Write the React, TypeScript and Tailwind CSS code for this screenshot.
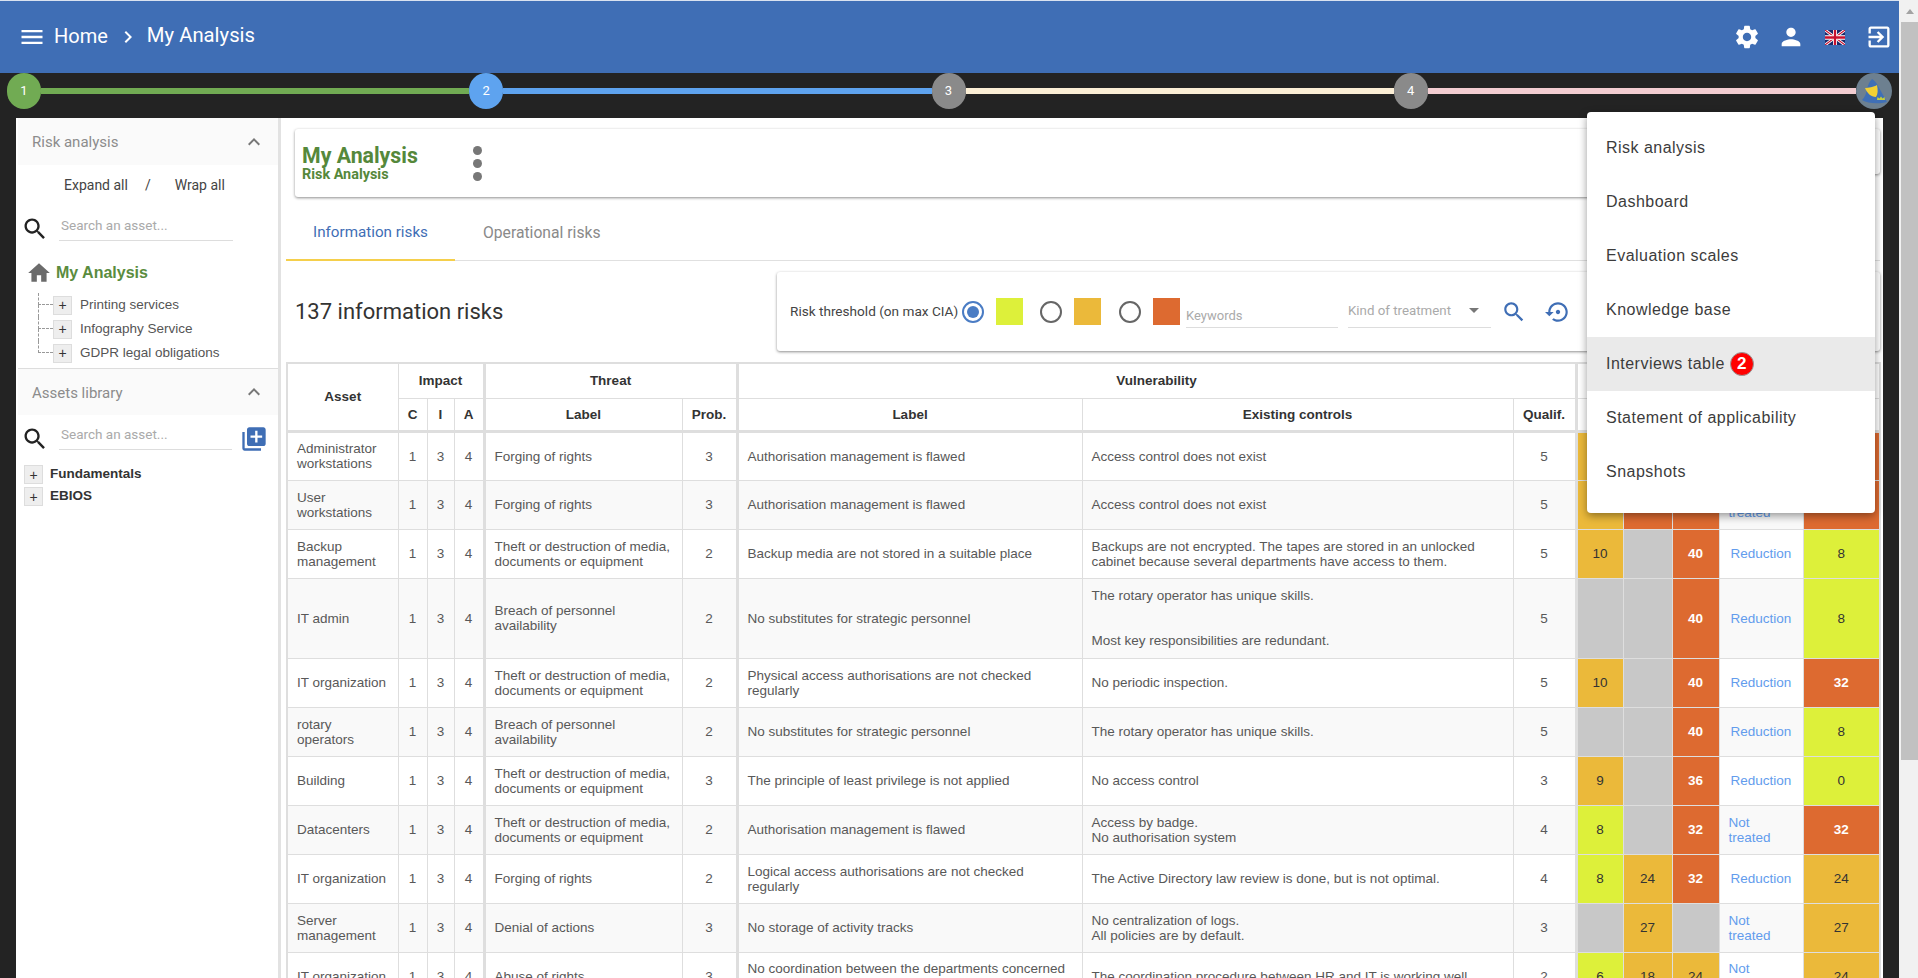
import React from "react";

const P = {
  settings: "M19.14 12.94c.04-.3.06-.61.06-.94 0-.32-.02-.64-.07-.94l2.03-1.58c.18-.14.23-.41.12-.61l-1.92-3.32c-.12-.22-.37-.29-.59-.22l-2.39.96c-.5-.38-1.03-.7-1.62-.94l-.36-2.54c-.04-.24-.24-.41-.48-.41h-3.84c-.24 0-.43.17-.47.41l-.36 2.54c-.59.24-1.13.57-1.62.94l-2.39-.96c-.22-.08-.47 0-.59.22L2.74 8.87c-.12.21-.08.47.12.61l2.03 1.58c-.05.3-.09.63-.09.94s.02.64.07.94l-2.03 1.58c-.18.14-.23.41-.12.61l1.92 3.32c.12.22.37.29.59.22l2.39-.96c.5.38 1.03.7 1.62.94l.36 2.54c.05.24.24.41.48.41h3.84c.24 0 .44-.17.47-.41l.36-2.54c.59-.24 1.13-.56 1.62-.94l2.39.96c.22.08.47 0 .59-.22l1.92-3.32c.12-.22.07-.47-.12-.61l-2.01-1.58zM12 15.6c-1.98 0-3.6-1.62-3.6-3.6s1.62-3.6 3.6-3.6 3.6 1.62 3.6 3.6-1.62 3.6-3.6 3.6z",
  person: "M12 12c2.21 0 4-1.79 4-4s-1.79-4-4-4-4 1.79-4 4 1.79 4 4 4zm0 2c-2.67 0-8 1.34-8 4v2h16v-2c0-2.66-5.33-4-8-4z",
  exit: "M10.09 15.59L11.5 17l5-5-5-5-1.41 1.41L12.67 11H3v2h9.67l-2.58 2.59zM19 3H5c-1.11 0-2 .9-2 2v4h2V5h14v14H5v-4H3v4c0 1.1.89 2 2 2h14c1.1 0 2-.9 2-2V5c0-1.1-.9-2-2-2z",
  menu: "M3 18h18v-2H3v2zm0-5h18v-2H3v2zm0-7v2h18V6H3z",
  chevron: "M10 6L8.59 7.41 13.17 12l-4.58 4.59L10 18l6-6z",
  less: "M12 8l-6 6 1.41 1.41L12 10.83l4.59 4.58L18 14z",
  search: "M15.5 14h-.79l-.28-.27C15.41 12.59 16 11.11 16 9.5 16 5.91 13.09 3 9.5 3S3 5.91 3 9.5 5.91 16 9.5 16c1.61 0 3.09-.59 4.23-1.57l.27.28v.79l5 4.99L20.49 19l-4.99-5zm-6 0C7.01 14 5 11.99 5 9.5S7.01 5 9.5 5 14 7.01 14 9.5 11.99 14 9.5 14z",
  home: "M10 20v-6h4v6h5v-8h3L12 3 2 12h3v8z",
  add: "M4 6H2v14c0 1.1.9 2 2 2h14v-2H4V6zm16-4H8c-1.1 0-2 .9-2 2v12c0 1.1.9 2 2 2h12c1.1 0 2-.9 2-2V4c0-1.1-.9-2-2-2zm-1 9h-4v4h-2v-4H9V9h4V5h2v4h4v2z",
  restore: "M14 12c0-1.1-.9-2-2-2s-2 .9-2 2 .9 2 2 2 2-.9 2-2zm-2-9c-4.97 0-9 4.03-9 9H0l4 4 4-4H5c0-3.87 3.13-7 7-7s7 3.13 7 7-3.13 7-7 7c-1.51 0-2.91-.49-4.06-1.3l-1.42 1.44C8.04 20.3 9.94 21 12 21c4.97 0 9-4.03 9-9s-4.03-9-9-9z",
};

function Ic({ d, className }: { d: string; className: string }) {
  return (
    <svg viewBox="0 0 24 24" className={className} fill="currentColor">
      <path d={d} />
    </svg>
  );
}

function Flag() {
  return (
    <svg viewBox="0 0 60 40" className="w-[20px] h-[15px]" preserveAspectRatio="none">
      <rect width="60" height="40" fill="#1b2a6b" />
      <path d="M0 0L60 40M60 0L0 40" stroke="#fff" strokeWidth="8" />
      <path d="M0 0L60 40M60 0L0 40" stroke="#c8102e" strokeWidth="3" />
      <path d="M30 0V40M0 20H60" stroke="#fff" strokeWidth="12" />
      <path d="M30 0V40M0 20H60" stroke="#c8102e" strokeWidth="7" />
    </svg>
  );
}

function Logo() {
  return (
    <svg viewBox="0 0 36 36" className="w-[36px] h-[36px] shrink-0">
      <circle cx="18" cy="18" r="18" fill="#6d8090" />
      <path d="M16 6C18 7 20 9 22 13L31 29C24 31 12 31 6 27C9 24 10 21 11 16C12 12 13 9 16 6z" fill="#3f6fb6" />
      <path d="M9 15C12 15 18 14 21 12C22 17 22 21 20 24C15 24 11 20 9 15z" fill="#f2d033" />
      <path d="M21 27l0.5-3 2 1.5 1.5-2 1.5 2 2-1.5 0.5 3z" fill="#c7cf3a" />
    </svg>
  );
}

const Y = "bg-[#ddf03a] text-[#333]";
const A = "bg-[#ebb93a] text-[#333]";
const O = "bg-[#dd6a30] text-white font-bold";
const G = "bg-[#c8c8c8]";

type C = [string, string];
type Row = {
  asset: React.ReactNode;
  threat: React.ReactNode;
  prob: number;
  vuln: React.ReactNode;
  ctrl: React.ReactNode;
  q: number;
  r: C[];
  treat: string;
  res: C;
  h?: string;
};

const THEFT = <>Theft or destruction of media,<br />documents or equipment</>;
const BREACH = <>Breach of personnel<br />availability</>;

const rows: Row[] = [
  { asset: <>Administrator<br />workstations</>, threat: "Forging of rights", prob: 3, vuln: "Authorisation management is flawed", ctrl: "Access control does not exist", q: 5, r: [[A, ""], [G, ""], [O, ""]], treat: "", res: [O, ""] },
  { asset: <>User<br />workstations</>, threat: "Forging of rights", prob: 3, vuln: "Authorisation management is flawed", ctrl: "Access control does not exist", q: 5, r: [[A, ""], [O, ""], [O, ""]], treat: "Not treated", res: [O, ""] },
  { asset: <>Backup<br />management</>, threat: THEFT, prob: 2, vuln: "Backup media are not stored in a suitable place", ctrl: <>Backups are not encrypted. The tapes are stored in an unlocked<br />cabinet because several departments have access to them.</>, q: 5, r: [[A, "10"], [G, ""], [O, "40"]], treat: "Reduction", res: [Y, "8"] },
  { asset: "IT admin", threat: BREACH, prob: 2, vuln: "No substitutes for strategic personnel", ctrl: <>The rotary operator has unique skills.<br /><br /><br />Most key responsibilities are redundant.</>, q: 5, r: [[G, ""], [G, ""], [O, "40"]], treat: "Reduction", res: [Y, "8"], h: "h-[80px]" },
  { asset: "IT organization", threat: THEFT, prob: 2, vuln: <>Physical access authorisations are not checked<br />regularly</>, ctrl: "No periodic inspection.", q: 5, r: [[A, "10"], [G, ""], [O, "40"]], treat: "Reduction", res: [O, "32"] },
  { asset: <>rotary<br />operators</>, threat: BREACH, prob: 2, vuln: "No substitutes for strategic personnel", ctrl: "The rotary operator has unique skills.", q: 5, r: [[G, ""], [G, ""], [O, "40"]], treat: "Reduction", res: [Y, "8"] },
  { asset: "Building", threat: THEFT, prob: 3, vuln: "The principle of least privilege is not applied", ctrl: "No access control", q: 3, r: [[A, "9"], [G, ""], [O, "36"]], treat: "Reduction", res: [Y, "0"] },
  { asset: "Datacenters", threat: THEFT, prob: 2, vuln: "Authorisation management is flawed", ctrl: <>Access by badge.<br />No authorisation system</>, q: 4, r: [[Y, "8"], [G, ""], [O, "32"]], treat: "Not treated", res: [O, "32"] },
  { asset: "IT organization", threat: "Forging of rights", prob: 2, vuln: <>Logical access authorisations are not checked<br />regularly</>, ctrl: "The Active Directory law review is done, but is not optimal.", q: 4, r: [[Y, "8"], [A, "24"], [O, "32"]], treat: "Reduction", res: [A, "24"] },
  { asset: <>Server<br />management</>, threat: "Denial of actions", prob: 3, vuln: "No storage of activity tracks", ctrl: <>No centralization of logs.<br />All policies are by default.</>, q: 3, r: [[G, ""], [A, "27"], [G, ""]], treat: "Not treated", res: [A, "27"] },
  { asset: "IT organization", threat: "Abuse of rights", prob: 3, vuln: <>No coordination between the departments concerned<br />&nbsp;</>, ctrl: "The coordination procedure between HR and IT is working well.", q: 2, r: [[Y, "6"], [A, "18"], [A, "24"]], treat: "Not treated", res: [A, "24"] },
];

const td = "border border-[#dedede] px-[9px] py-0 align-middle";
const tc = "border border-[#dedede] p-0 text-center align-middle";
const th = "border border-[#dedede] p-0 text-center align-middle font-bold text-[#333]";
const thick = "border-l-[3px] border-l-[#dedede]";

function RiskTable() {
  return (
    <table className="table-fixed border-collapse w-[1593px] border-2 border-[#dedede] text-[13.5px] leading-[15px] text-[#585858]">
      <colgroup>
        <col className="w-[111px]" />
        <col className="w-[29px]" />
        <col className="w-[27px]" />
        <col className="w-[30px]" />
        <col className="w-[198px]" />
        <col className="w-[55px]" />
        <col className="w-[345px]" />
        <col className="w-[431px]" />
        <col className="w-[63px]" />
        <col className="w-[47px]" />
        <col className="w-[49px]" />
        <col className="w-[47px]" />
        <col className="w-[84px]" />
        <col className="w-[77px]" />
      </colgroup>
      <thead>
        <tr className="h-[35px]">
          <th rowSpan={2} className={th}>Asset</th>
          <th colSpan={3} className={th}>Impact</th>
          <th colSpan={2} className={`${th} ${thick}`}>Threat</th>
          <th colSpan={3} className={`${th} ${thick}`}>Vulnerability</th>
          <th colSpan={5} className={`${th} ${thick}`}></th>
        </tr>
        <tr className="h-[33px] border-b-[3px] border-b-[#dedede]">
          <th className={th}>C</th>
          <th className={th}>I</th>
          <th className={th}>A</th>
          <th className={`${th} ${thick}`}>Label</th>
          <th className={th}>Prob.</th>
          <th className={`${th} ${thick}`}>Label</th>
          <th className={th}>Existing controls</th>
          <th className={th}>Qualif.</th>
          <th className={`${th} ${thick}`}></th>
          <th className={th}></th>
          <th className={th}></th>
          <th className={th}></th>
          <th className={th}></th>
        </tr>
      </thead>
      <tbody>
        {rows.map((r, i) => (
          <tr key={i} className={`${r.h ?? "h-[49px]"} ${i % 2 ? "bg-[#f9f9f9]" : "bg-white"}`}>
            <td className={td}>{r.asset}</td>
            <td className={tc}>1</td>
            <td className={tc}>3</td>
            <td className={tc}>4</td>
            <td className={`${td} ${thick}`}>{r.threat}</td>
            <td className={tc}>{r.prob}</td>
            <td className={`${td} ${thick}`}>{r.vuln}</td>
            <td className={td}>{r.ctrl}</td>
            <td className={tc}>{r.q}</td>
            <td className={`${tc} ${thick} ${r.r[0][0]}`}>{r.r[0][1]}</td>
            <td className={`${tc} ${r.r[1][0]}`}>{r.r[1][1]}</td>
            <td className={`${tc} ${r.r[2][0]}`}>{r.r[2][1]}</td>
            <td className={`${td} text-[#629ced]`}>
              {r.treat === "Not treated" ? <>Not<br />treated</> : <span className="pl-[2px]">{r.treat}</span>}
            </td>
            <td className={`${tc} ${r.res[0]}`}>{r.res[1]}</td>
          </tr>
        ))}
      </tbody>
    </table>
  );
}

function PlusBox({ className = "" }: { className?: string }) {
  return (
    <span className={`flex w-[19px] h-[19px] shrink-0 items-center justify-center bg-[#eee] border border-[#ddd] text-[#333] text-[14px] leading-none ${className}`}>+</span>
  );
}

function AccordionHead({ label, h }: { label: string; h: string }) {
  return (
    <div className={`${h} ml-[2px] pl-[14px] pr-[12px] flex items-center justify-between bg-[#fafafa] text-[15px] text-[#8c8c8c] font-[Roboto,sans-serif]`}>
      <span className="pt-[2px]">{label}</span>
      <Ic d={P.less} className="w-[24px] h-[24px] text-[#777]" />
    </div>
  );
}

function TreeRow({ label, last, h }: { label: string; last?: boolean; h: string }) {
  return (
    <li className={`flex items-center ${h}`}>
      <div className="w-[15px] h-full flex flex-col self-stretch shrink-0">
        <div className="h-1/2 border-l border-b border-dashed border-[#999]" />
        <div className={`h-1/2 ${last ? "" : "border-l border-dashed border-[#999]"}`} />
      </div>
      <PlusBox />
      <span className="ml-[8px] text-[13.5px] text-[#555]">{label}</span>
    </li>
  );
}

function Stepper() {
  const circle = "w-[34px] h-[36px] rounded-full flex items-center justify-center text-white text-[13px] shrink-0 font-[Roboto,sans-serif]";
  return (
    <div className="h-[45px] pl-[7px] pr-[7px] flex items-start">
      <div className={`${circle} bg-[#71ab53]`}>1</div>
      <div className="flex-1 h-[6px] mt-[15px] bg-[#71ab53]" />
      <div className={`${circle} bg-[#5ea3ef]`}>2</div>
      <div className="flex-1 h-[6px] mt-[15px] bg-[#5ea3ef]" />
      <div className={`${circle} bg-[#8a8a8a]`}>3</div>
      <div className="flex-1 h-[6px] mt-[15px] bg-[#fbeed5]" />
      <div className={`${circle} bg-[#8a8a8a]`}>4</div>
      <div className="flex-1 h-[6px] mt-[15px] bg-[#f2cdd1]" />
      <Logo />
    </div>
  );
}

function Radio({ on }: { on?: boolean }) {
  return (
    <svg viewBox="0 0 24 24" className={`w-[24px] h-[24px] shrink-0 ${on ? "text-[#4a7cc4]" : "text-[#666]"}`} fill="none">
      <circle cx="12" cy="12" r="10" stroke="currentColor" strokeWidth="2" />
      {on && <circle cx="12" cy="12" r="6" fill="currentColor" />}
    </svg>
  );
}

const menuItems = ["Risk analysis", "Dashboard", "Evaluation scales", "Knowledge base", "Interviews table", "Statement of applicability", "Snapshots"];

export default function App() {
  return (
    <div className="relative flex w-[1918px] h-[978px] overflow-hidden bg-white font-['Liberation_Sans',Arial,sans-serif]">
      <div className="w-[1899px] h-full flex flex-col shrink-0">
        <header className="h-[73px] shrink-0 border-t border-t-[#d9e2f0] bg-[#3f6eb5] text-white flex items-center pl-[18px] pr-[6px] font-[Roboto,sans-serif]">
          <Ic d={P.menu} className="w-[28px] h-[28px]" />
          <span className="ml-[8px] text-[20px] pb-[3px]">Home</span>
          <Ic d={P.chevron} className="w-[24px] h-[24px] ml-[8px]" />
          <span className="ml-[7px] text-[20.3px] pb-[3px]">My Analysis</span>
          <div className="ml-auto flex items-center gap-[16px]">
            <Ic d={P.settings} className="w-[28px] h-[28px]" />
            <Ic d={P.person} className="w-[28px] h-[28px]" />
            <div className="w-[28px] flex justify-center"><Flag /></div>
            <Ic d={P.exit} className="w-[28px] h-[28px]" />
          </div>
        </header>

        <div className="flex-1 min-h-0 bg-[#232323] flex flex-col">
          <Stepper />
          <div className="flex-1 min-h-0 mx-[16px] bg-white flex overflow-hidden">
            <aside className="w-[265px] shrink-0 border-r-[3px] border-r-[#e2e2e2]">
              <AccordionHead label="Risk analysis" h="h-[47px]" />
              <div className="h-[40px] pl-[48px] flex items-center text-[14px] text-[#444] font-[Roboto,sans-serif]">
                <span>Expand all</span>
                <span className="ml-[17px]">/</span>
                <span className="ml-[24px]">Wrap all</span>
              </div>
              <div className="flex items-center pl-[5px] h-[36px] mt-[3px]">
                <Ic d={P.search} className="w-[28px] h-[28px] mt-[5px] text-[#222] shrink-0" />
                <div className="ml-[10px] w-[174px] h-[30px] border-b border-b-[#ddd] text-[13.5px] text-[#aaa] pt-[4px] pl-[2px] font-[Roboto,sans-serif]">Search an asset...</div>
              </div>
              <div className="flex items-center h-[32px] mt-[13px] pl-[10px]">
                <Ic d={P.home} className="w-[26px] h-[26px] text-[#6b6b6b]" />
                <span className="ml-[4px] text-[16px] font-bold text-[#5a8c3e]">My Analysis</span>
              </div>
              <ul className="pl-[22px] mt-[4px] h-[75px]">
                <TreeRow label="Printing services" h="h-[24px]" />
                <TreeRow label="Infography Service" h="h-[24px]" />
                <TreeRow label="GDPR legal obligations" h="h-[24px]" last />
              </ul>
              <div className="ml-[2px] border-t border-t-[#ddd]" />
              <AccordionHead label="Assets library" h="h-[46px]" />
              <div className="flex items-center pl-[5px] h-[36px] mt-[1px]">
                <Ic d={P.search} className="w-[28px] h-[28px] mt-[10px] text-[#222] shrink-0" />
                <div className="ml-[10px] w-[173px] h-[31px] border-b border-b-[#ddd] text-[13.5px] text-[#aaa] pt-[5px] pl-[2px] font-[Roboto,sans-serif]">Search an asset...</div>
                <Ic d={P.add} className="ml-[8px] mt-[10px] w-[28px] h-[28px] text-[#3f6eb5] shrink-0" />
              </div>
              <div className="pl-[8px] mt-[13px] text-[13.5px] font-bold text-[#333] space-y-[3px]">
                <div className="flex items-center h-[19px]"><PlusBox className="font-normal" /><span className="ml-[7px]">Fundamentals</span></div>
                <div className="flex items-center h-[19px]"><PlusBox className="font-normal" /><span className="ml-[7px]">EBIOS</span></div>
              </div>
            </aside>

            <main className="flex-1 min-w-0 pl-[5px]">
              <div className="ml-[9px] mt-[11px] w-[1585px] flex items-start gap-[1px]">
                <div className="flex-1 h-[68px] bg-white rounded-[3px] shadow-[0_1px_3px_rgba(0,0,0,0.45)] flex items-center pl-[7px]">
                  <div className="w-[171px] font-[Roboto,sans-serif] font-bold text-[#55883b] leading-none">
                    <div className="text-[21.3px] leading-[22px]">My Analysis</div>
                    <div className="text-[14.4px] leading-[15px]">Risk Analysis</div>
                  </div>
                  <div className="flex flex-col gap-[4px]">
                    <span className="w-[9px] h-[9px] rounded-full bg-[#777]" />
                    <span className="w-[9px] h-[9px] rounded-full bg-[#777]" />
                    <span className="w-[9px] h-[9px] rounded-full bg-[#777]" />
                  </div>
                </div>
                <div className="w-[10px] h-[45px] bg-white rounded-[3px] shadow-[0_1px_3px_rgba(0,0,0,0.45)]" />
              </div>

              <div className="mt-[16px] h-[48px] w-[1594px] border-b border-b-[#e0e0e0] flex font-[Roboto,sans-serif] text-[15.2px]">
                <div className="w-[169px] h-[48px] pb-[8px] flex items-center justify-center text-[#3f6eb5] border-b-[2px] border-b-[#f5cf4b]">Information risks</div>
                <div className="ml-[28px] pb-[8px] flex items-center text-[15.7px] text-[#8a8a8a]">Operational risks</div>
              </div>

              <div className="mt-[11px] flex items-center w-[1594px]">
                <h2 className="ml-[9px] w-[482px] text-[22px] font-normal text-[#333] font-[Roboto,sans-serif]">137 information risks</h2>
                <div className="h-[79px] flex-1 bg-white rounded-[3px] shadow-[0_1px_3px_rgba(0,0,0,0.45)] flex items-center pl-[13px] font-[Roboto,sans-serif]">
                  <span className="text-[13.6px] text-[#444] whitespace-nowrap w-[171px]">Risk threshold (on max CIA)</span>
                  <Radio on />
                  <span className="ml-[11px] w-[27px] h-[27px] bg-[#ddf03a]" />
                  <span className="ml-[16px]"><Radio /></span>
                  <span className="ml-[11px] w-[27px] h-[27px] bg-[#ebb93a]" />
                  <span className="ml-[17px]"><Radio /></span>
                  <span className="ml-[11px] w-[27px] h-[27px] bg-[#dd6a30]" />
                  <div className="ml-[6px] w-[152px] h-[31px] mt-[2px] border-b border-b-[#ddd] pt-[11px] text-[13px] leading-[15px] text-[#aaa]">Keywords</div>
                  <div className="ml-[10px] w-[143px] h-[31px] mt-[2px] border-b border-b-[#ddd] flex items-center justify-between text-[13.3px] text-[#aaa] pb-[3px]">
                    <span>Kind of treatment</span>
                    <span className="mr-[12px] w-0 h-0 border-x-[5px] border-x-transparent border-t-[5px] border-t-[#777]" />
                  </div>
                  <Ic d={P.search} className="ml-[10px] w-[26px] h-[26px] text-[#3f6eb5]" />
                  <Ic d={P.restore} className="ml-[18px] w-[26px] h-[26px] text-[#3f6eb5]" />
                </div>
              </div>

              <div className="mt-[11px]">
                <RiskTable />
              </div>
            </main>
          </div>
        </div>
      </div>

      <div className="w-[19px] h-full shrink-0 pl-[2px] bg-[#f1f1f1] flex flex-col">
        <div className="h-[22px] shrink-0 flex items-center justify-center">
          <span className="w-0 h-0 border-x-[4px] border-x-transparent border-b-[5px] border-b-[#a3a3a3]" />
        </div>
        <div className="h-[738px] bg-[#c1c1c1]" />
      </div>

      <div className="absolute left-[1587px] top-[112px] w-[288px] h-[401px] pt-[9px] bg-white rounded-[4px] shadow-[0_3px_8px_rgba(0,0,0,0.4)] text-[16px] text-[#3c3c3c] tracking-[0.48px]">
        {menuItems.map((m) => (
          <div key={m} className={`h-[54px] pl-[19px] flex items-center ${m === "Interviews table" ? "bg-[#eaeaea]" : ""}`}>
            {m}
            {m === "Interviews table" && (
              <span className="ml-[5px] w-[24px] h-[24px] rounded-full bg-[#f00] border border-[#999] text-white font-bold text-[17px] flex items-center justify-center">2</span>
            )}
          </div>
        ))}
      </div>
    </div>
  );
}
